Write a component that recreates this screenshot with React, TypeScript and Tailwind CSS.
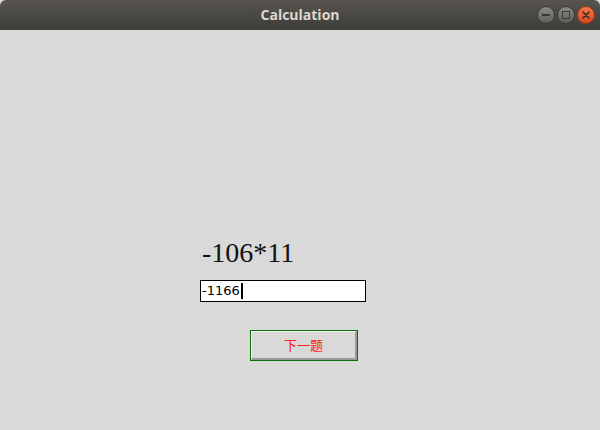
import React from "react";

export default function App() {
  return (
    <div className="w-[600px] h-[430px] bg-[#d9d9d9] flex flex-col overflow-hidden">
      <div className="h-[30px] shrink-0 rounded-t-[6px] bg-gradient-to-b from-[#57544f] to-[#3e3d39] relative flex items-center justify-center">
        <span
          className="text-[14px] font-bold text-[#dcd8cf] leading-none"
          style={{ fontFamily: '"Open Sans", "DejaVu Sans", sans-serif' }}
        >
          Calculation
        </span>
        <div className="absolute right-[5px] top-[6px] flex gap-[2px]">
          <div className="w-[18px] h-[18px] rounded-full bg-gradient-to-b from-[#8c8a85] to-[#5f5d59] border border-[#3a3935] flex items-center justify-center">
            <div className="w-[8px] h-[2px] bg-[#3a3935]" />
          </div>
          <div className="w-[18px] h-[18px] rounded-full bg-gradient-to-b from-[#8c8a85] to-[#5f5d59] border border-[#3a3935] flex items-center justify-center">
            <div className="w-[8px] h-[8px] border-[1.5px] border-[#3a3935]" />
          </div>
          <div className="w-[18px] h-[18px] rounded-full bg-gradient-to-b from-[#f27649] to-[#d9481b] border border-[#9e3513] flex items-center justify-center">
            <svg width="8" height="8" viewBox="0 0 8 8">
              <path d="M1 1 L7 7 M7 1 L1 7" stroke="#3b2a22" strokeWidth="1.6" strokeLinecap="round" />
            </svg>
          </div>
        </div>
      </div>
      <div className="flex-1 flex flex-col pl-[200px] pt-[207px]">
        <div
          className="pl-[2px] text-[28px] leading-[32px] text-[#111111]"
          style={{ fontFamily: '"Liberation Serif", serif' }}
        >
          -106*11
        </div>
        <div
          className="mt-[11px] w-[166px] h-[22px] border border-black bg-white flex items-center pl-[1px] text-[13px] text-black"
          style={{ fontFamily: '"DejaVu Sans", sans-serif' }}
        >
          <span>-1166</span>
          <span className="w-[2px] h-[16px] bg-black ml-[1px]" />
        </div>
        <div className="mt-[28px] ml-[50px] w-[108px] h-[31px] border border-[#0b6e0b] bg-[#d9d9d9]">
          <div
            className="w-full h-full border-t border-l border-[#f4f4f4] border-b-[2px] border-r-[2px] border-b-[#9a9a9a] border-r-[#9a9a9a] flex items-center justify-center text-[13px] text-[#ff2020]"
            style={{ fontFamily: '"Noto Sans CJK SC", sans-serif' }}
          >
            下一题
          </div>
        </div>
      </div>
    </div>
  );
}
